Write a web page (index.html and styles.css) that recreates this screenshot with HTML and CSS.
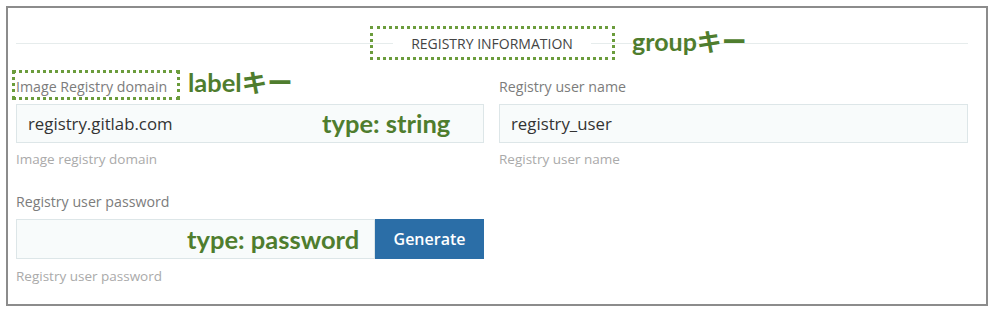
FILE: index.html
```html
<!DOCTYPE html>
<html lang="ja">
<head>
    <meta charset="UTF-8">
    <meta name="viewport" content="width=device-width, initial-scale=1.0">
    <title>Registry Information</title>
    <link rel="stylesheet" href="styles.css">
</head>
<body>

<div class="frame">
    <div class="group-header">
        <span class="group-title">REGISTRY INFORMATION</span>
    </div>

    <div class="fields">
        <div class="field">
            <label class="field-label">Image Registry domain</label>
            <div class="input">registry.gitlab.com</div>
            <div class="help">Image registry domain</div>
        </div>

        <div class="field">
            <label class="field-label">Registry user name</label>
            <div class="input">registry_user</div>
            <div class="help">Registry user name</div>
        </div>

        <div class="field field-second">
            <label class="field-label">Registry user password</label>
            <div class="input-group">
                <div class="input"></div>
                <button class="btn">Generate</button>
            </div>
            <div class="help">Registry user password</div>
        </div>
    </div>

    <!-- annotations -->
    <div class="note-box box-group"></div>
    <div class="note note-group">groupキー</div>
    <div class="note-box box-label"></div>
    <div class="note note-label">labelキー</div>
    <div class="note note-string">type: string</div>
    <div class="note note-password">type: password</div>
</div>

</body>
</html>
```

FILE: styles.css
```css
* {
    box-sizing: border-box;
    margin: 0;
    padding: 0;
}

body {
    font-family: 'Open Sans', 'Noto Sans', sans-serif;
    background-color: #fff;
    width: 1000px;
    height: 316px;
    overflow: hidden;
}

.frame {
    position: relative;
    margin: 6px 0 0 6px;
    width: 982px;
    height: 300px;
    border: 2px solid #8c8c8c;
    padding: 22px 18px 0 8px;
}

.group-header {
    display: flex;
    align-items: center;
    height: 26px;
}

.group-header::before,
.group-header::after {
    content: '';
    flex: 1;
    height: 1px;
    background-color: #e6ecec;
}

.group-title {
    padding: 0 18px;
    font-size: 14px;
    color: #444;
}

.fields {
    display: grid;
    grid-template-columns: 468px 469px;
    column-gap: 15px;
    margin-top: 22px;
}

.field-second {
    margin-top: 26px;
}

.field-label {
    display: block;
    font-size: 14.2px;
    line-height: 18px;
    color: #7c7c7c;
    margin-bottom: 8px;
}

.input {
    height: 39px;
    background-color: #f8fbfb;
    border: 1px solid #dde6e8;
    padding: 0 11px;
    font-size: 16.8px;
    line-height: 37px;
    color: #333;
}

.input-group {
    display: flex;
    height: 40px;
}

.input-group .input {
    flex: 1;
    height: 40px;
}

.btn {
    width: 109px;
    border: none;
    background-color: #2b6ea7;
    color: #fff;
    font-family: inherit;
    font-size: 16px;
    font-weight: 600;
}

.help {
    margin-top: 8px;
    font-size: 13.5px;
    line-height: 16px;
    color: #aaa;
}

.field-second .help {
    margin-top: 9px;
}

/* annotation layer */
.note-box {
    position: absolute;
    border: 3px dotted #6b9c3c;
}

.box-group {
    left: 362px;
    top: 18px;
    width: 245px;
    height: 34px;
}

.box-label {
    left: 4px;
    top: 62px;
    width: 168px;
    height: 30px;
}

.note {
    position: absolute;
    font-family: 'Lato', 'Noto Sans CJK JP', sans-serif;
    font-weight: bold;
    color: #4f7d2e;
    line-height: 1;
    white-space: nowrap;
}

.note-group {
    left: 624px;
    top: 21px;
    font-size: 25px;
}

.note-label {
    left: 180px;
    top: 62px;
    font-size: 25.5px;
}

.note-string {
    left: 314px;
    top: 103px;
    font-size: 25.5px;
}

.note-password {
    left: 179px;
    top: 219px;
    font-size: 25.5px;
}
```
